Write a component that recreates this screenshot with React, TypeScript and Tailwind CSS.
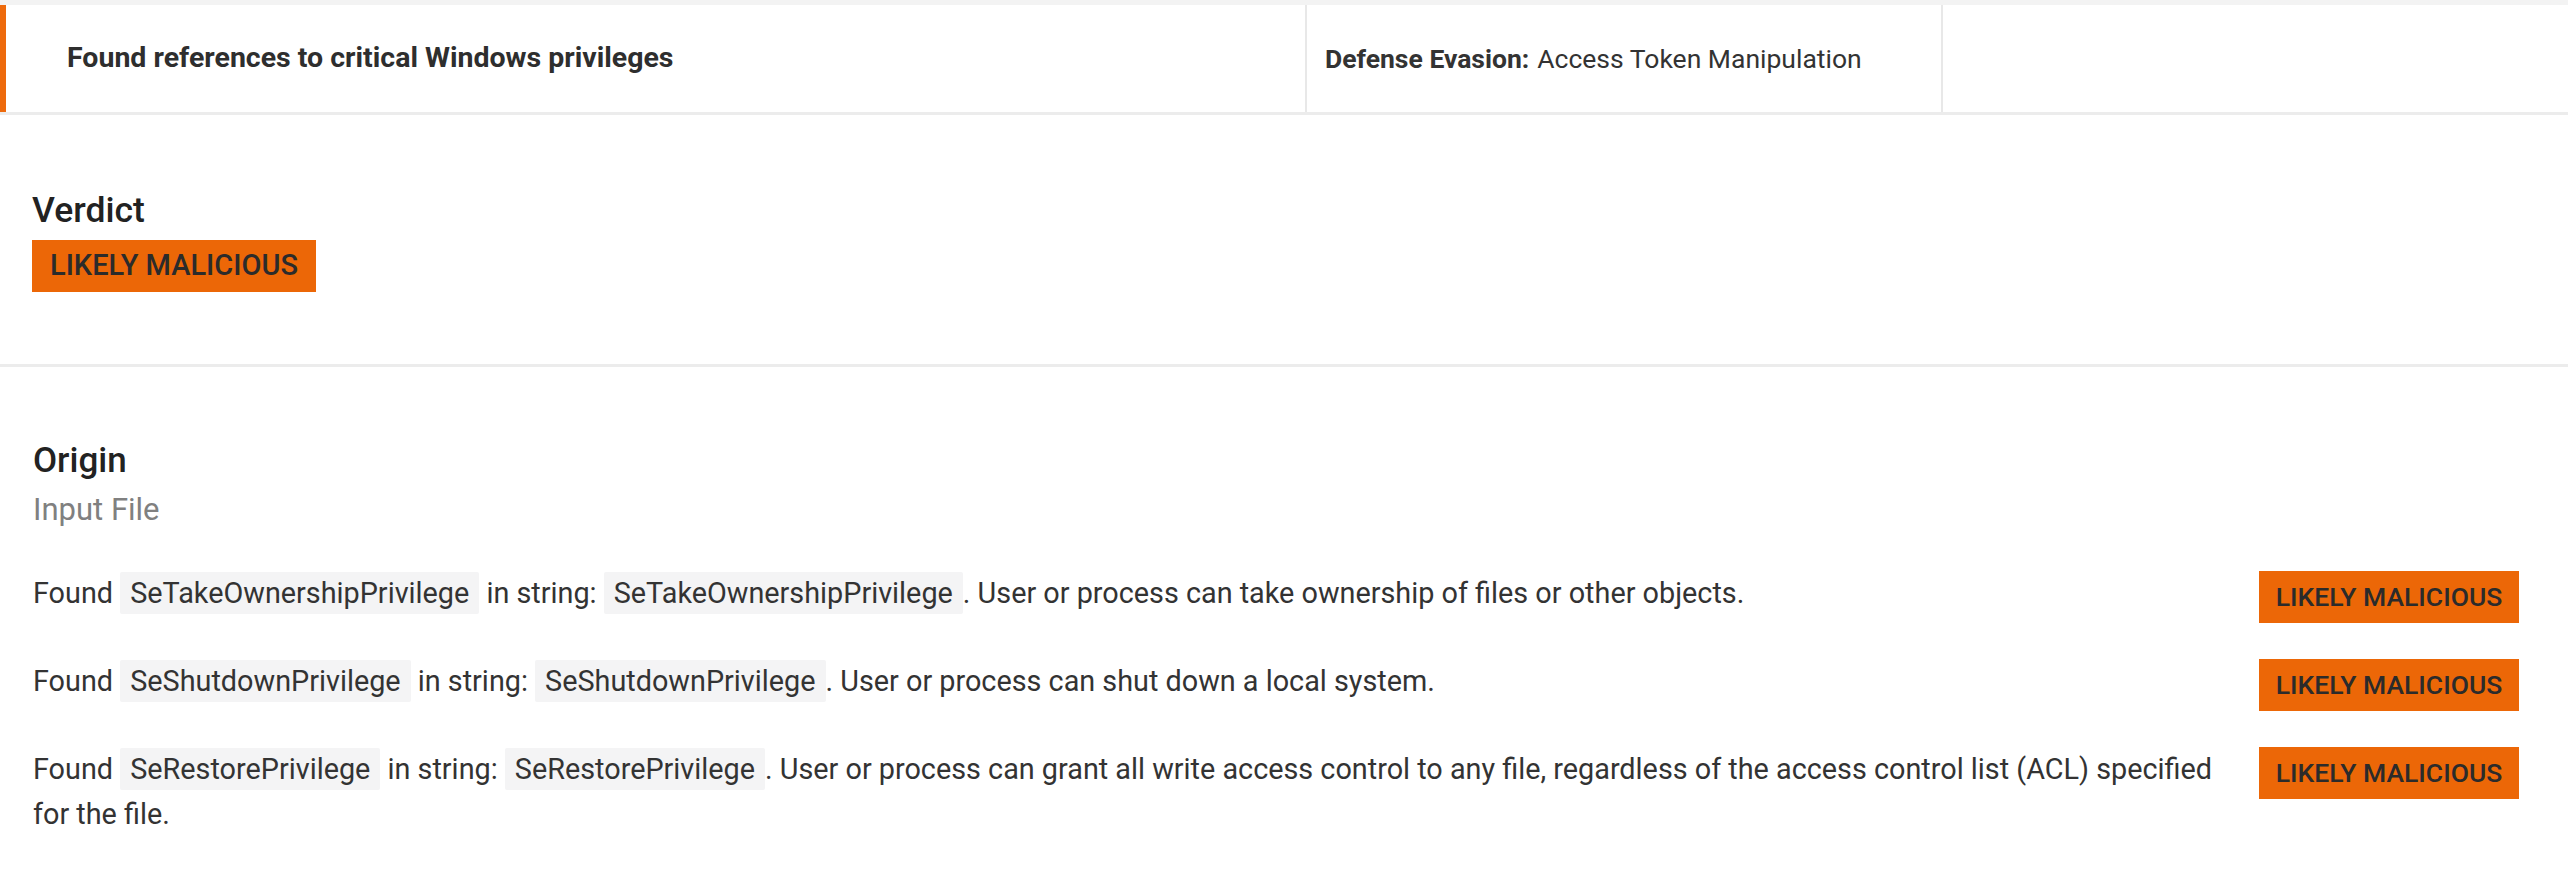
const rows = [
  {
    name: "SeTakeOwnershipPrivilege",
    text: "User or process can take ownership of files or other objects.",
  },
  {
    name: "SeShutdownPrivilege",
    text: "User or process can shut down a local system.",
  },
  {
    name: "SeRestorePrivilege",
    text: "User or process can grant all write access control to any file, regardless of the access control list (ACL) specified for the file.",
  },
];

function Chip({ children }: { children: string }) {
  return (
    <span className="rounded-[2px] bg-[#f4f4f5] px-[10px] py-[4px]">
      {children}
    </span>
  );
}

export default function App() {
  return (
    <div className="min-h-screen w-full bg-white font-['Roboto',sans-serif] text-[#333]">
      {/* finding header */}
      <div className="border-t-[5px] border-[#f3f3f3]">
        <div className="flex h-[110px] border-b-[3px] border-[#ececec]">
          <div className="flex w-[1305px] items-center border-l-[6px] border-[#ee6a0c] pl-[61px] text-[28.5px] font-bold text-[#2e2e2e]">
            Found references to critical Windows privileges
          </div>
          <div className="flex w-[636px] items-center border-l-2 border-[#e8e8e8] pl-[18px] text-[26.5px]">
            <span className="mr-[8px] font-bold">Defense Evasion:</span>
            Access Token Manipulation
          </div>
          <div className="flex-1 border-l-2 border-[#e8e8e8]"></div>
        </div>
      </div>

      {/* verdict */}
      <div className="border-b-[3px] border-[#ececec] pb-[72px] pl-[32px] pt-[75px]">
        <div className="text-[35.5px] font-medium leading-[40px] text-[#222]">Verdict</div>
        <div className="mt-[10px] inline-flex h-[52px] items-center bg-[#ec6707] px-[18px] text-[29px] font-medium text-[#2b2b2b]">
          LIKELY MALICIOUS
        </div>
      </div>

      {/* origin */}
      <div className="pb-[40px] pl-[33px] pr-[49px] pt-[74px]">
        <div className="text-[35px] font-medium leading-[40px] text-[#222]">Origin</div>
        <div className="mt-[9px] text-[31px] leading-[40px] text-[#808080]">Input File</div>

        <div className="mt-[41px] flex flex-col gap-[36px]">
          {rows.map((r) => (
            <div key={r.name} className="flex items-start gap-[36px]">
              <div className="flex-1 text-[28.8px] leading-[45px]">
                Found <Chip>{r.name}</Chip> in string: <Chip>{r.name}</Chip>. {r.text}
              </div>
              <div className="flex h-[52px] w-[260px] shrink-0 items-center justify-center bg-[#ec6707] text-[26.5px] font-medium text-[#2b2b2b]">
                LIKELY MALICIOUS
              </div>
            </div>
          ))}
        </div>
      </div>
    </div>
  );
}
